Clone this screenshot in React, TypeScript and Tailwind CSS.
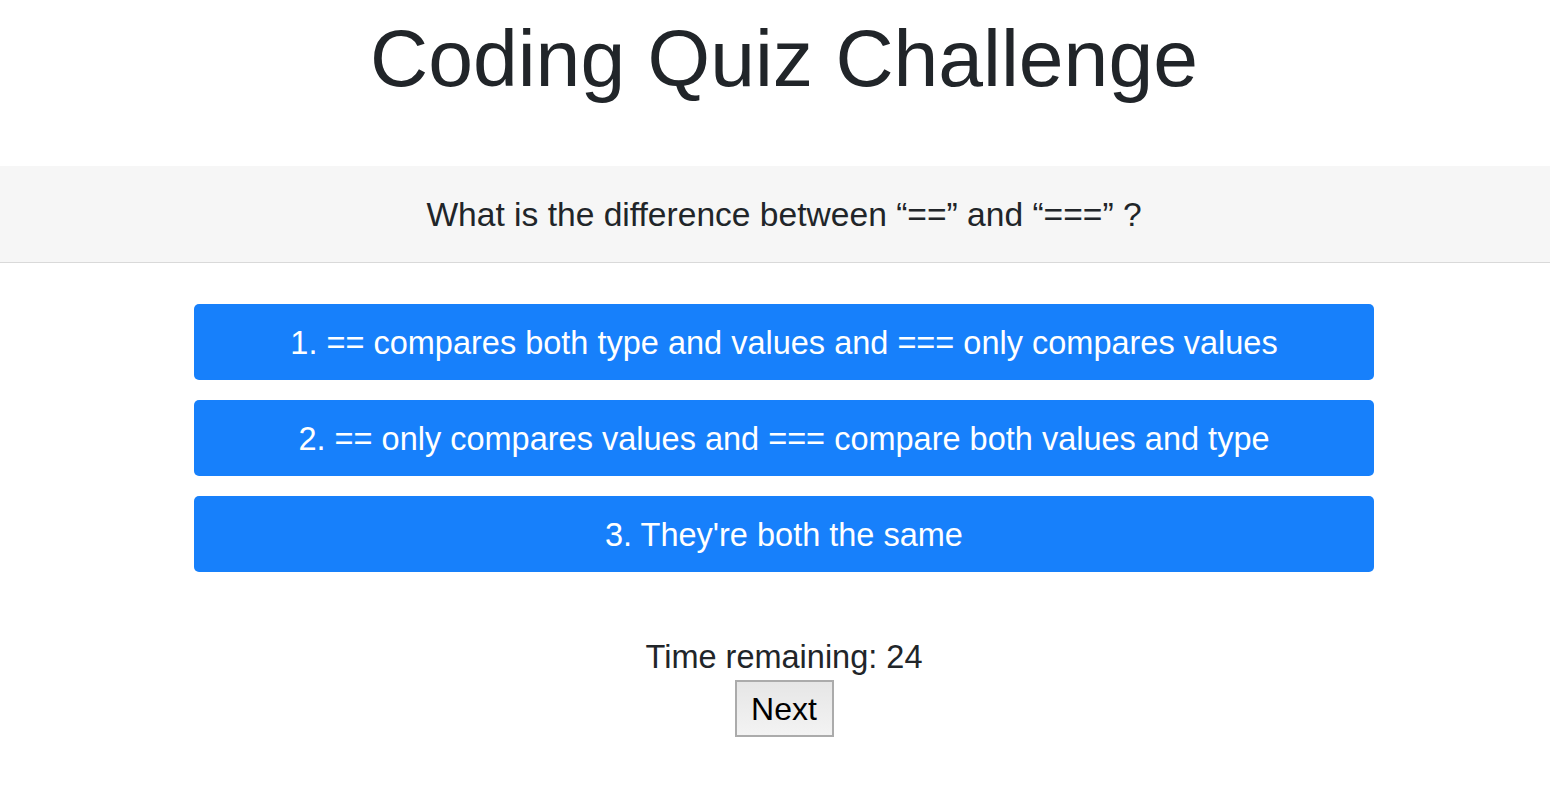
import React from "react";

export default function App() {
  const answers = [
    "1. == compares both type and values and === only compares values",
    "2. == only compares values and === compare both values and type",
    "3. They're both the same",
  ];
  return (
    <div className="w-[1550px] h-[792px] bg-white text-[#212529] font-['Liberation_Sans',Arial,sans-serif]">
      <div className="h-[166px] flex justify-center pt-[10px] pl-[18px]">
        <h1 className="text-[80.5px] leading-[96px] font-normal">Coding Quiz Challenge</h1>
      </div>
      <div className="h-[97px] bg-[#f6f6f6] border-b border-[#d9d9d9] flex items-center justify-center pl-[18px]">
        <p className="text-[33.6px] leading-[36px] pt-[2px]">What is the difference between “==” and “===” ?</p>
      </div>
      <div className="flex flex-col items-center gap-[20px] pt-[41px] pl-[18px]">
        {answers.map((a) => (
          <button
            key={a}
            className="w-[1180px] h-[76px] rounded-[5px] bg-[#1780fb] text-white text-[32.5px] leading-[38px] pt-[2px] flex items-center justify-center"
          >
            {a}
          </button>
        ))}
      </div>
      <div className="flex flex-col items-center pt-[67px] pl-[18px]">
        <p className="text-[32.5px] leading-[36px]">Time remaining: 24</p>
        <button className="mt-[5px] w-[99px] h-[57px] border-2 border-[#ababab] bg-gradient-to-b from-[#e6e6e6] to-[#f3f3f3] text-black text-[32px] leading-[36px] flex items-center justify-center">
          Next
        </button>
      </div>
    </div>
  );
}
